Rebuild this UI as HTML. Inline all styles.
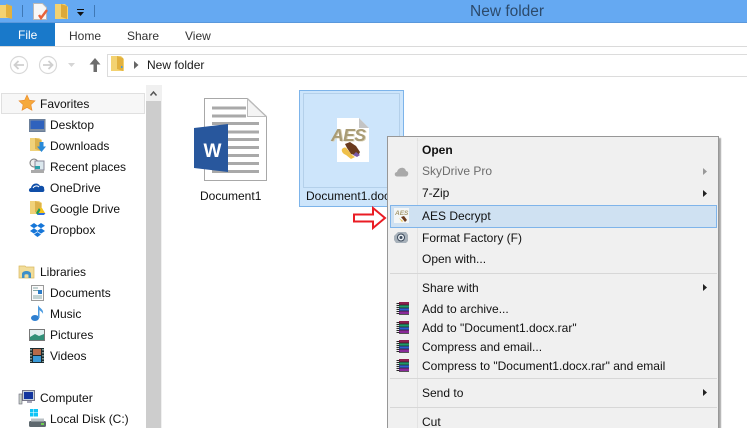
<!DOCTYPE html>
<html><head><meta charset="utf-8"><style>
html,body{margin:0;padding:0;width:747px;height:428px;overflow:hidden;background:#fff}
body{position:relative;font-family:"Liberation Sans",sans-serif;font-size:12px;color:#111}
.a{position:absolute}
.t{position:absolute;white-space:nowrap;line-height:16px;height:16px}
svg{position:absolute;overflow:visible}
</style></head><body>
<!-- title bar -->
<div class="a" style="left:0;top:0;width:747px;height:22px;background:#65a9f2"></div>
<div class="a" style="left:0;top:22px;width:747px;height:1px;background:#5a98dc"></div>
<div class="t" style="left:470px;top:4px;font-size:15.5px;color:#2c4a6b">New folder</div>
<svg style="left:0;top:3px" width="14" height="17"><path d="M0 2h9l3 3v10H0z" fill="#f3d271"/><path d="M6 1l6 2v13l-6-2z" fill="#e2b13f"/></svg>
<div class="a" style="left:22px;top:5px;width:1px;height:12px;background:#3f78b5"></div>
<svg style="left:33px;top:3px" width="15" height="17"><path d="M.5.5h9l4 4v12H.5z" fill="#f7f7f7" stroke="#b8b8b8"/><path d="M6 12l2 3 6-8" fill="none" stroke="#e8623a" stroke-width="2.400"/></svg>
<svg style="left:55px;top:3px" width="14" height="17"><path d="M0 1h10l3 3v12H0z" fill="#f3d271"/><path d="M6 1l6 2v13l-6-2z" fill="#dca93a"/></svg>
<svg style="left:77px;top:9px" width="8" height="8"><path d="M0 0h7v1H0zM0 3h7L3.500 7z" fill="#111"/></svg>
<div class="a" style="left:94px;top:5px;width:1px;height:12px;background:#3f78b5"></div>
<!-- ribbon -->
<div class="a" style="left:0;top:23px;width:55px;height:23px;background:#1979ca"></div>
<div class="t" style="left:18px;top:27px;color:#fff">File</div>
<div class="t" style="left:69px;top:28px;color:#333">Home</div>
<div class="t" style="left:127px;top:28px;color:#333">Share</div>
<div class="t" style="left:185px;top:28px;color:#333">View</div>
<div class="a" style="left:0;top:46px;width:747px;height:1px;background:#dadada"></div>
<!-- nav -->
<svg style="left:9px;top:55px" width="20" height="20"><circle cx="10" cy="10" r="8.500" fill="#fff" stroke="#d8d8d8" stroke-width="1.200"/><path d="M15 10H6M9.500 6L5.500 10l4 4" fill="none" stroke="#cfcfcf" stroke-width="1.800"/></svg>
<svg style="left:38px;top:55px" width="20" height="20"><circle cx="10" cy="10" r="8.500" fill="#fff" stroke="#d8d8d8" stroke-width="1.200"/><path d="M5 10h9M10.500 6l4 4-4 4" fill="none" stroke="#cfcfcf" stroke-width="1.800"/></svg>
<svg style="left:68px;top:63px" width="7" height="4"><path d="M0 0h7L3.500 4z" fill="#d5d5d5"/></svg>
<svg style="left:89px;top:58px" width="12" height="14"><path d="M6 0l5.500 6.500H8V14H4.500V6.500H.5z" fill="#6d6d6d"/></svg>
<div class="a" style="left:107px;top:54px;width:640px;height:21px;border:1px solid #dcdcdc;border-right:0"></div>
<svg style="left:111px;top:55px" width="14" height="17"><path d="M0 1h10l3 3v12H0z" fill="#f3d271"/><path d="M6 1l6 2v13l-6-2z" fill="#e2b13f"/><rect x="10" y="11" width="1.500" height="2" fill="#4a9ad8"/></svg>
<svg style="left:134px;top:61px" width="5" height="8"><path d="M0 0l4.500 4L0 8z" fill="#666"/></svg>
<div class="t" style="left:147px;top:57px;color:#1a1a1a">New folder</div>
<!-- sidebar -->
<div class="a" style="left:146px;top:85px;width:15px;height:343px;background:#cdcdcd"></div>
<div class="a" style="left:146px;top:85px;width:15px;height:16px;background:#f0f0f0"></div>
<svg style="left:150px;top:91px" width="7" height="5"><path d="M.5 4.500L3.500 1l3 3.500" fill="none" stroke="#555" stroke-width="1.500"/></svg>
<div class="a" style="left:161px;top:85px;width:1px;height:343px;background:#f0f0f0"></div>
<div class="a" style="left:1px;top:93px;width:142px;height:19px;background:#f7f7f7;border:1px solid #e0e0e0"></div>
<svg style="left:19px;top:95px" width="16" height="16"><path d="M8 0l2.400 5.200 5.600.7-4.100 3.800 1.100 5.600L8 12.500 3 15.300l1.100-5.600L0 5.900l5.600-.7z" fill="#f6a93b" stroke="#e98a2a" stroke-width=".6"/></svg>
<div class="t" style="left:40px;top:96px">Favorites</div>
<svg style="left:29px;top:119px" width="17" height="13"><rect x=".5" y=".5" width="15.500" height="12" fill="#7f8fa3" stroke="#6b7f99"/><rect x="1.500" y="1.500" width="13.500" height="8.500" fill="#2f62bd"/></svg>
<div class="t" style="left:50px;top:117px">Desktop</div>
<svg style="left:30px;top:137px" width="17" height="17"><path d="M0 1h9l3 2v11H0z" fill="#f0d27a"/><path d="M5 1l6 2v11l-6-2z" fill="#dcb24c"/><path d="M9.500 5h4v4.500h2.500L11.500 15 7 9.500h2.500z" fill="#2a8ad8"/></svg>
<div class="t" style="left:50px;top:138px">Downloads</div>
<svg style="left:29px;top:158px" width="16" height="16"><circle cx="5" cy="5" r="4" fill="#eee" stroke="#777"/><rect x="6" y="3" width="9" height="9" fill="#dce8ee" stroke="#889"/><rect x="6" y="8" width="5" height="3" fill="#2aa0a8"/><rect x="2" y="12" width="13" height="3" fill="#aaa"/></svg>
<div class="t" style="left:50px;top:159px">Recent places</div>
<svg style="left:29px;top:182px" width="16" height="11"><path d="M2 10C-1 10-.5 6 2 6 3 1 9 0 11 4c2-1 5 1 4 3 1 1 0 3-1 3z" fill="#0f4ea8"/><path d="M4 6c1-2 4-3 6-1" stroke="#fff" fill="none"/></svg>
<div class="t" style="left:50px;top:180px">OneDrive</div>
<svg style="left:30px;top:200px" width="16" height="16"><path d="M0 1h9l3 2v11H0z" fill="#f0d27a"/><path d="M5 1l6 2v11l-6-2z" fill="#dcb24c"/><path d="M9 8h3l3 5H7z" fill="#f5c518"/><path d="M9 8l-3 5 1.500 2 3-5z" fill="#1e9e56"/><path d="M7.500 15H14l1.500-2H8.500z" fill="#2f6fe0"/></svg>
<div class="t" style="left:50px;top:201px">Google Drive</div>
<svg style="left:30px;top:223px" width="15" height="14"><path d="M4 0L0 2.700l4 2.600-4 2.700 4 2.600 3.500-2.400 3.500 2.400 4-2.600-4-2.700 4-2.600L11 0 7.500 2.500zM7.500 3l3.500 2.300L7.500 7.700 4 5.300zM4 11.500l3.500 2.500 3.500-2.500-3.500-2.400z" fill="#1676d8" fill-rule="evenodd"/></svg>
<div class="t" style="left:50px;top:222px">Dropbox</div>

<svg style="left:19px;top:265px" width="16" height="14"><path d="M0 1h6l1 1h8v11H0z" fill="#f2dd9a" stroke="#d9b860" stroke-width=".7"/><path d="M3 13V9c0-4 9-4 9 0v4H9.500v-3c0-1-4-1-4 0v3z" fill="#3d8fc9"/></svg>
<div class="t" style="left:40px;top:264px">Libraries</div>
<svg style="left:31px;top:285px" width="13" height="16"><rect x=".5" y=".5" width="12" height="15" fill="#fbfbfb" stroke="#9a9a9a"/><path d="M2 3h5M2 5.500h5M2 11h9M2 13h9" stroke="#8aa"/><rect x="7" y="5" width="4" height="4" fill="#2b7cc7"/></svg>
<div class="t" style="left:50px;top:285px">Documents</div>
<svg style="left:31px;top:305px" width="14" height="16"><ellipse cx="4" cy="13" rx="4" ry="3" fill="#2f7fd0"/><path d="M7 13V0c1 3 6 4 5 9-.5-2-3-3-3.500-4V13z" fill="#4a9ae0"/></svg>
<div class="t" style="left:50px;top:306px">Music</div>
<svg style="left:29px;top:329px" width="16" height="12"><rect x=".5" y=".5" width="15" height="11" fill="#dff0f0" stroke="#777"/><path d="M1 8l5-3 4 2 5-2v6H1z" fill="#2f9078"/></svg>
<div class="t" style="left:50px;top:327px">Pictures</div>
<svg style="left:30px;top:348px" width="14" height="15"><rect width="14" height="15" fill="#1c2b30"/><rect x="3" y="1" width="8" height="6" fill="#b56a4a"/><rect x="3" y="8" width="8" height="6" fill="#3a9ad8"/><path d="M1 1v13M13 1v13" stroke="#dfe" stroke-dasharray="1.500 1.500"/></svg>
<div class="t" style="left:50px;top:348px">Videos</div>

<svg style="left:19px;top:390px" width="16" height="15"><rect x="3.500" y=".5" width="12" height="10" fill="#c4d0dc" stroke="#778"/><rect x="5" y="2" width="9" height="7" fill="#13359e"/><rect x="8" y="11" width="5" height="2" fill="#aab"/><rect x="0" y="4" width="3" height="10" fill="#c9d0c9" stroke="#667" stroke-width=".6"/></svg>
<div class="t" style="left:40px;top:390px">Computer</div>
<svg style="left:29px;top:409px" width="17" height="18"><path d="M1 0h3.500v3.500H1zM5 0h4v3.500H5zM1 4h3.500v3.500H1zM5 4h4v3.500H5z" fill="#0fc4f6"/><rect x="0" y="12" width="17" height="6" rx="1.500" fill="#5e686e"/><rect x="2" y="9.500" width="13" height="3" fill="#b9c0c4"/><rect x="12" y="14" width="3" height="2" fill="#6fd050"/></svg>
<div class="t" style="left:50px;top:411px">Local Disk (C:)</div>

<!-- files -->
<svg style="left:194px;top:98px" width="74" height="84">
<path d="M10.500.5h43l19 18v64h-62z" fill="#fff" stroke="#a8a8a8"/>
<path d="M53.500 1v17.500h18.500z" fill="#f4f4f4" stroke="#bdbdbd"/>
<g fill="#a9a9a9"><rect x="18" y="8.500" width="34" height="3"/><rect x="18" y="16.500" width="34" height="3"/></g>
<g fill="#a9a9a9"><rect x="18" y="24" width="47" height="3"/><rect x="18" y="32.500" width="47" height="3"/><rect x="18" y="40" width="47" height="3"/><rect x="18" y="48" width="47" height="3"/><rect x="18" y="56" width="47" height="3"/><rect x="18" y="64" width="47" height="3"/><rect x="18" y="72" width="47" height="3"/></g>
<path d="M0 30L34 26V74L0 70z" fill="#28579d"/>
<text x="9.500" y="59" font-family="Liberation Sans" font-size="19" font-weight="bold" fill="#fff">W</text>
</svg>
<div class="t" style="left:200px;top:188px;color:#111">Document1</div>
<div class="a" style="left:299px;top:90px;width:103px;height:115px;background:#cde5fb;border:1px solid #7db4ea"></div>
<div class="a" style="left:303px;top:93px;width:95px;height:93px;border:1px solid #b4d0ea"></div>
<svg style="left:331px;top:118px" width="40" height="44">
<path d="M6 0h22l10 10v34H6z" fill="#fff"/><path d="M28 0v10h10z" fill="#c4c4c4"/>
<text x="1" y="23.500" font-family="Liberation Sans" font-size="17.500" font-style="italic" font-weight="bold" fill="#d8d0b4" letter-spacing="-.5">AES</text>
<text x="0" y="23" font-family="Liberation Sans" font-size="17.500" font-style="italic" font-weight="bold" fill="#a99c76" letter-spacing="-.5">AES</text>
<path d="M14 26l5-2 6 4 4 6-2 4-7-2-4-6z" fill="#6a3a1e"/><path d="M25 34l4 3-3 2-4-2z" fill="#7a5aa8"/>
<path d="M11 31c2-2 4-2 5 0l5 6 3 2-4 2-5-4c-3-1-5-4-4-6z" fill="#efc04a"/>
</svg>
<div class="t" style="left:306px;top:188px;color:#111">Document1.docx</div>

<!-- arrow -->
<svg style="left:352px;top:206px" width="36" height="24"><path d="M2 8.500h19V2l12 10-12 10v-6.500H2z" fill="#fff" stroke="#ea1c24" stroke-width="2"/></svg>

<!-- menu -->
<div class="a" style="left:387px;top:136px;width:330px;height:292px;background:#f0f0f0;border:1px solid #979797;border-bottom:0;box-shadow:2px 2px 1px #a8a8a8"></div>
<div class="a" style="left:417px;top:138px;width:1px;height:290px;background:#e3e3e3"></div>
<div class="a" style="left:390px;top:205px;width:325px;height:21px;background:#cfe1f2;border:1px solid #7fb4ea"></div>
<div class="a" style="left:390px;top:273px;width:327px;height:1px;background:#d7d7d7"></div>
<div class="a" style="left:390px;top:378px;width:327px;height:1px;background:#d7d7d7"></div>
<div class="a" style="left:390px;top:407px;width:327px;height:1px;background:#d7d7d7"></div>
<div class="t" style="left:422px;top:142px;font-weight:bold">Open</div>
<svg style="left:394px;top:166px" width="15" height="11"><path d="M3 10.500C0 10.500 0 6 3 6c1-5 8-6 9-1 3 0 3 5 0 5.500z" fill="#a9a9a9"/></svg>
<div class="t" style="left:422px;top:163px;color:#6d6d6d">SkyDrive Pro</div>
<div class="t" style="left:422px;top:185px">7-Zip</div>
<svg style="left:394px;top:208px" width="15" height="15"><rect width="15" height="15" fill="#f4f6f6"/><text x="1" y="7" font-family="Liberation Sans" font-size="6.500" font-style="italic" font-weight="bold" fill="#a89b72">AES</text><path d="M7 9l3-1 3 4-2 2z" fill="#6b3a1e"/><path d="M5 10l4 3-1 1z" fill="#eec04d"/></svg>
<div class="t" style="left:422px;top:208px">AES Decrypt</div>
<svg style="left:393px;top:231px" width="16" height="13"><path d="M1 5l4-4h8l2 3v6l-2 2H3l-2-3z" fill="#a7b1ba"/><circle cx="8" cy="6.500" r="3.500" fill="#e8eef2" stroke="#3c4a5c"/><circle cx="8" cy="6.500" r="1.500" fill="#3c4a5c"/></svg>
<div class="t" style="left:422px;top:230px">Format Factory (F)</div>
<div class="t" style="left:422px;top:251px">Open with...</div>
<div class="t" style="left:422px;top:280px">Share with</div>
<svg style="left:396px;top:302px" width="14" height="13"><rect x="3" y="0" width="10" height="3" fill="#8c1f4e"/><rect x="3" y="3" width="10" height="3" fill="#1f9a6a"/><rect x="3" y="6" width="10" height="3" fill="#2f5fd0"/><rect x="3" y="9" width="10" height="3" fill="#8a2a9a"/><path d="M.5 1.500h3M.5 3.500h3M.5 5.500h3M.5 7.500h3M.5 9.500h3M.5 11.500h3" stroke="#222"/><path d="M3 12.500h10M3 3h10M3 6h10M3 9h10" stroke="#222" stroke-width=".7"/></svg>
<div class="t" style="left:422px;top:301px">Add to archive...</div>
<svg style="left:396px;top:321px" width="14" height="13"><rect x="3" y="0" width="10" height="3" fill="#8c1f4e"/><rect x="3" y="3" width="10" height="3" fill="#1f9a6a"/><rect x="3" y="6" width="10" height="3" fill="#2f5fd0"/><rect x="3" y="9" width="10" height="3" fill="#8a2a9a"/><path d="M.5 1.500h3M.5 3.500h3M.5 5.500h3M.5 7.500h3M.5 9.500h3M.5 11.500h3" stroke="#222"/><path d="M3 12.500h10M3 3h10M3 6h10M3 9h10" stroke="#222" stroke-width=".7"/></svg>
<div class="t" style="left:422px;top:320px">Add to "Document1.docx.rar"</div>
<svg style="left:396px;top:340px" width="14" height="13"><rect x="3" y="0" width="10" height="3" fill="#8c1f4e"/><rect x="3" y="3" width="10" height="3" fill="#1f9a6a"/><rect x="3" y="6" width="10" height="3" fill="#2f5fd0"/><rect x="3" y="9" width="10" height="3" fill="#8a2a9a"/><path d="M.5 1.500h3M.5 3.500h3M.5 5.500h3M.5 7.500h3M.5 9.500h3M.5 11.500h3" stroke="#222"/><path d="M3 12.500h10M3 3h10M3 6h10M3 9h10" stroke="#222" stroke-width=".7"/></svg>
<div class="t" style="left:422px;top:339px">Compress and email...</div>
<svg style="left:396px;top:359px" width="14" height="13"><rect x="3" y="0" width="10" height="3" fill="#8c1f4e"/><rect x="3" y="3" width="10" height="3" fill="#1f9a6a"/><rect x="3" y="6" width="10" height="3" fill="#2f5fd0"/><rect x="3" y="9" width="10" height="3" fill="#8a2a9a"/><path d="M.5 1.500h3M.5 3.500h3M.5 5.500h3M.5 7.500h3M.5 9.500h3M.5 11.500h3" stroke="#222"/><path d="M3 12.500h10M3 3h10M3 6h10M3 9h10" stroke="#222" stroke-width=".7"/></svg>
<div class="t" style="left:422px;top:358px">Compress to "Document1.docx.rar" and email</div>
<div class="t" style="left:422px;top:385px">Send to</div>
<div class="t" style="left:422px;top:414px">Cut</div>
<svg style="left:703px;top:168px" width="4" height="7"><path d="M0 0l4 3.500L0 7z" fill="#999"/></svg>
<svg style="left:703px;top:190px" width="4" height="7"><path d="M0 0l4 3.500L0 7z" fill="#222"/></svg>
<svg style="left:703px;top:284px" width="4" height="7"><path d="M0 0l4 3.500L0 7z" fill="#222"/></svg>
<svg style="left:703px;top:389px" width="4" height="7"><path d="M0 0l4 3.500L0 7z" fill="#222"/></svg>
</body></html>
